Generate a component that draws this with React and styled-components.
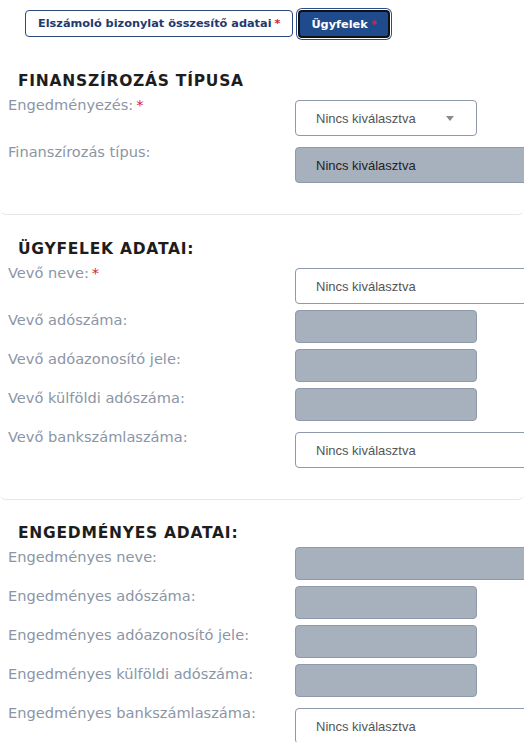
import React from "react";
import styled, { createGlobalStyle } from "styled-components";

const GlobalStyle = createGlobalStyle`
  body {
    margin: 0;
    background: #fff;
    font-family: "DejaVu Sans", "Noto Sans", sans-serif;
    overflow: hidden;
  }
`;

const Page = styled.div`
  width: 524px;
  overflow: hidden;
`;

const Tabs = styled.div`
  display: flex;
  gap: 5px;
  padding: 10px 0 0 25px;
`;

const Tab = styled.button`
  height: ${(p) => (p.$active ? "28px" : "27px")};
  padding: 0 ${(p) => (p.$active ? "11px" : "12px")};
  border-radius: 4px;
  font-family: "DejaVu Sans", sans-serif;
  font-weight: bold;
  font-size: 11.3px;
  cursor: pointer;
  color: ${(p) => (p.$active ? "#fff" : "#1e3a6e")};
  background: ${(p) => (p.$active ? "#1f4a8c" : "#fff")};
  border: ${(p) => (p.$active ? "2px solid #111" : "1px solid #2c4a7c")};
  box-shadow: ${(p) => (p.$active ? "0 0 0 1px #fff, 0 0 0 2px #2c4f8c" : "none")};
`;

const Star = styled.span`
  color: #e0202e;
  margin-left: 3px;
`;

const Card = styled.section`
  padding: ${(p) => p.$pad};
  border-bottom: ${(p) => (p.$last ? "none" : "1px solid #e6e6e6")};
  border-radius: 0 0 6px 6px;
`;

const Heading = styled.h2`
  margin: 0 0 4px 18px;
  line-height: 19px;
  font-family: "DejaVu Sans", sans-serif;
  font-weight: bold;
  font-size: 15.5px;
  letter-spacing: 0.75px;
  color: #1d1d1d;
`;

const Row = styled.div`
  display: grid;
  grid-template-columns: 295px 1fr;
  align-items: start;
  margin-bottom: 6px;
`;

const Label = styled.div`
  padding: 0 0 0 8px;
  line-height: 20px;
  font-size: 14.6px;
  color: #8b95a5;
  white-space: nowrap;
`;

const Field = styled.div`
  box-sizing: border-box;
  width: ${(p) => (p.$wide ? "280px" : "182px")};
  height: ${(p) => (p.$select ? "36px" : "33px")};
  margin-top: ${(p) => (p.$select ? "5px" : "0")};
  display: flex;
  align-items: center;
  justify-content: space-between;
  padding: 0 22px 0 20px;
  border-radius: 4px;
  border: 1px solid #8e99a9;
  background: ${(p) => (p.$filled ? "#a7b0bd" : "#fff")};
  color: ${(p) => (p.$filled ? "#222" : "#555")};
  font-family: "Liberation Sans", sans-serif;
  font-size: 13px;
`;

const Caret = styled.span`
  width: 0;
  height: 0;
  border-left: 4px solid transparent;
  border-right: 4px solid transparent;
  border-top: 5px solid #8a8a8a;
`;

function FormRow({ label, required, field }) {
  const { wide, select, filled, text, caret } = field;
  return (
    <Row>
      <Label>
        {label}
        {required && <Star>*</Star>}
      </Label>
      <Field $wide={wide} $select={select} $filled={filled}>
        <span>{text}</span>
        {caret && <Caret />}
      </Field>
    </Row>
  );
}

const NONE = "Nincs kiválasztva";

const sections = [
  {
    title: "FINANSZÍROZÁS TÍPUSA",
    pad: "34px 0 25px",
    rows: [
      { label: "Engedményezés:", required: true, field: { select: true, text: NONE, caret: true } },
      { label: "Finanszírozás típus:", field: { select: true, wide: true, filled: true, text: NONE } },
    ],
  },
  {
    title: "ÜGYFELEK ADATAI:",
    pad: "25px 0 25px",
    rows: [
      { label: "Vevő neve:", required: true, field: { select: true, wide: true, text: NONE } },
      { label: "Vevő adószáma:", field: { filled: true } },
      { label: "Vevő adóazonosító jele:", field: { filled: true } },
      { label: "Vevő külföldi adószáma:", field: { filled: true } },
      { label: "Vevő bankszámlaszáma:", field: { select: true, wide: true, text: NONE } },
    ],
  },
  {
    title: "ENGEDMÉNYES ADATAI:",
    pad: "24px 0 0",
    last: true,
    rows: [
      { label: "Engedményes neve:", field: { wide: true, filled: true } },
      { label: "Engedményes adószáma:", field: { filled: true } },
      { label: "Engedményes adóazonosító jele:", field: { filled: true } },
      { label: "Engedményes külföldi adószáma:", field: { filled: true } },
      { label: "Engedményes bankszámlaszáma:", field: { select: true, wide: true, text: NONE } },
    ],
  },
];

export default function App() {
  return (
    <Page>
      <GlobalStyle />
      <Tabs>
        <Tab>
          Elszámoló bizonylat összesítő adatai<Star>*</Star>
        </Tab>
        <Tab $active>
          Ügyfelek<Star>*</Star>
        </Tab>
      </Tabs>
      {sections.map((s) => (
        <Card key={s.title} $pad={s.pad} $last={s.last}>
          <Heading>{s.title}</Heading>
          {s.rows.map((r) => (
            <FormRow key={r.label} {...r} />
          ))}
        </Card>
      ))}
    </Page>
  );
}
